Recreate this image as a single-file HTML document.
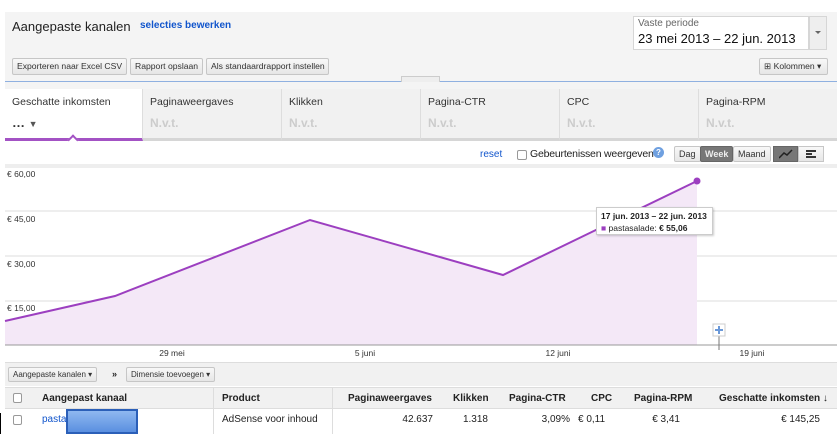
<!DOCTYPE html>
<html><head><meta charset="utf-8"><style>
*{box-sizing:border-box;margin:0;padding:0}
body{width:837px;height:434px;overflow:hidden;background:#fff;font-family:"Liberation Sans",Arial,sans-serif;font-size:11px;color:#222;position:relative}
.a{position:absolute}
.btn{position:absolute;height:17px;border:1px solid #c6c6c6;border-radius:2px;background:linear-gradient(#f8f8f8,#e6e6e6);font-size:8.6px;line-height:15px;padding:0 4px;color:#333;white-space:nowrap}
.tab{position:absolute;top:89px;height:52px;background:#f1f1f1;border-right:1px solid #ddd;border-bottom:3px solid #d6d6d6}
.tab .t{position:absolute;left:7px;top:7px;font-size:10.5px;color:#333}
.tab .v{position:absolute;left:7px;top:27px;font-size:12px;font-weight:bold;color:#ccc}
.th{position:absolute;top:393px;font-weight:bold;font-size:10px;color:#222}
.td{position:absolute;top:414px;font-size:10px;color:#222}
</style></head><body>
<div class="a" style="left:5px;top:12px;width:832px;height:77px;background:#f4f4f4"></div>
<div class="a" style="left:12px;top:19px;font-size:13px;color:#222">Aangepaste kanalen</div>
<div class="a" style="left:140px;top:20px;font-size:10px;font-weight:bold;color:#1155cc">selecties bewerken</div>
<div class="a" style="left:633px;top:16px;width:176px;height:34px;background:#fff;border:1px solid #d6d6d6"></div>
<div class="a" style="left:809px;top:16px;width:18px;height:34px;background:#eee;border:1px solid #d6d6d6"></div>
<div class="a" style="left:815px;top:31px;border:3px solid transparent;border-top:3px solid #666"></div>
<div class="a" style="left:638px;top:18px;font-size:10px;color:#666">Vaste periode</div>
<div class="a" style="left:638px;top:31px;font-size:13px;color:#111">23 mei 2013 – 22 jun. 2013</div>
<div class="btn" style="left:12px;top:58px;width:115px">Exporteren naar Excel CSV</div>
<div class="btn" style="left:130px;top:58px;width:73px">Rapport opslaan</div>
<div class="btn" style="left:206px;top:58px;width:123px">Als standaardrapport instellen</div>
<div class="btn" style="left:759px;top:58px;width:69px">⊞ Kolommen ▾</div>
<div class="a" style="left:5px;top:81px;width:832px;height:1px;background:#8fb0e0"></div>
<div class="a" style="left:401px;top:76px;width:39px;height:6px;background:#eee;border:1px solid #ccc;border-bottom:none"></div>
<div class="tab" style="left:5px;width:138px;background:#fff;border-bottom-color:#a352c4"><div class="t">Geschatte inkomsten</div><div class="v" style="color:#333;font-size:13px;top:26px">… <span style="font-size:9px;color:#555">▼</span></div></div>
<div class="a" style="left:69px;top:136px;width:8px;height:8px;background:#fff;border-left:2px solid #a352c4;border-top:2px solid #a352c4;transform:rotate(45deg)"></div>
<div class="tab" style="left:143px;width:139px"><div class="t">Paginaweergaves</div><div class="v">N.v.t.</div></div>
<div class="tab" style="left:282px;width:139px"><div class="t">Klikken</div><div class="v">N.v.t.</div></div>
<div class="tab" style="left:421px;width:139px"><div class="t">Pagina-CTR</div><div class="v">N.v.t.</div></div>
<div class="tab" style="left:560px;width:139px"><div class="t">CPC</div><div class="v">N.v.t.</div></div>
<div class="tab" style="left:699px;width:138px;border-right:none"><div class="t">Pagina-RPM</div><div class="v">N.v.t.</div></div>
<div class="a" style="left:480px;top:149px;font-size:10px;color:#1155cc">reset</div>
<div class="a" style="left:517px;top:150px;width:10px;height:10px;border:1px solid #999;border-radius:2px;background:#fff"></div>
<div class="a" style="left:530px;top:148px;font-size:10.5px;color:#222;letter-spacing:-0.2px">Gebeurtenissen weergeven</div>
<div class="a" style="left:653px;top:147px;width:11px;height:11px;border-radius:50%;background:#6fa0e0;color:#fff;font-size:8px;text-align:center;line-height:11px;font-weight:bold">?</div>
<div class="btn" style="left:674px;top:146px;height:16px;font-size:9px">Dag</div>
<div class="btn" style="left:700px;top:146px;height:16px;font-size:9px;background:#777;color:#eee;border-color:#666;font-weight:bold">Week</div>
<div class="btn" style="left:733px;top:146px;height:16px;font-size:9px">Maand</div>
<div class="a" style="left:773px;top:146px;width:25px;height:16px;background:#777;border:1px solid #666"></div>
<svg class="a" style="left:779px;top:149px" width="14" height="10"><path d="M0 9 L5 4 L8 6 L13 1" stroke="#222" stroke-width="1.5" fill="none"/></svg>
<div class="a" style="left:798px;top:146px;width:26px;height:16px;background:linear-gradient(#f8f8f8,#e6e6e6);border:1px solid #c6c6c6"></div>
<div class="a" style="left:806px;top:150px;width:10px;height:2px;background:#333"></div>
<div class="a" style="left:806px;top:153px;width:6px;height:2px;background:#333"></div>
<div class="a" style="left:806px;top:156px;width:10px;height:2px;background:#333"></div>
<svg class="a" style="left:0;top:164px" width="837" height="200">
<line x1="5" y1="1" x2="837" y2="1" stroke="#ddd"/>
<line x1="5" y1="3" x2="837" y2="3" stroke="#ddd"/>
<line x1="5" y1="47" x2="837" y2="47" stroke="#ddd"/>
<line x1="5" y1="92" x2="837" y2="92" stroke="#ddd"/>
<line x1="5" y1="137" x2="837" y2="137" stroke="#ddd"/>
<path d="M5 157 L115 132 L310 56 L503 111 L697 17 L697 181 L5 181Z" fill="#f4e8f7"/>
<line x1="5" y1="181" x2="837" y2="181" stroke="#999"/>
<path d="M5 157 L115 132 L310 56 L503 111 L697 17" stroke="#9c3fc0" stroke-width="2" fill="none"/>
<circle cx="697" cy="17" r="3.5" fill="#9c3fc0"/>
<line x1="719" y1="170" x2="719" y2="186" stroke="#777"/>
<rect x="713" y="160" width="12" height="12" fill="#fff" stroke="#ccc"/>
<path d="M719 162v8M715 166h8" stroke="#6a98d8" stroke-width="2"/>
<text x="7" y="13" font-size="8.5" fill="#333">€ 60,00</text>
<text x="7" y="58" font-size="8.5" fill="#333">€ 45,00</text>
<text x="7" y="103" font-size="8.5" fill="#333">€ 30,00</text>
<text x="7" y="147" font-size="8.5" fill="#333">€ 15,00</text>
<text x="172" y="192" font-size="8.5" fill="#333" text-anchor="middle">29 mei</text>
<text x="365" y="192" font-size="8.5" fill="#333" text-anchor="middle">5 juni</text>
<text x="558" y="192" font-size="8.5" fill="#333" text-anchor="middle">12 juni</text>
<text x="752" y="192" font-size="8.5" fill="#333" text-anchor="middle">19 juni</text>
</svg>
<div class="a" style="left:596px;top:207px;width:117px;height:28px;background:#fff;border:1px solid #ccc;box-shadow:1px 1px 2px rgba(0,0,0,.2);font-size:8.5px;padding:2px 4px;line-height:12px"><b>17 jun. 2013 – 22 jun. 2013</b><br><span style="color:#9c3fc0">■</span> pastasalade: <b>€ 55,06</b></div>
<div class="a" style="left:5px;top:362px;width:832px;height:24px;background:#f1f1f1;border-top:1px solid #ddd"></div>
<div class="btn" style="left:8px;top:367px;height:15px;font-size:8px;line-height:13px">Aangepaste kanalen ▾</div>
<div class="a" style="left:112px;top:369px;font-size:9px;font-weight:bold">»</div>
<div class="btn" style="left:126px;top:367px;height:15px;font-size:8px;line-height:13px">Dimensie toevoegen ▾</div>
<div class="a" style="left:5px;top:387px;width:832px;height:22px;background:#f1f1f1;border-top:1px solid #ddd;border-bottom:1px solid #ddd"></div>
<div class="a" style="left:213px;top:387px;width:1px;height:47px;background:#ddd"></div>
<div class="a" style="left:332px;top:387px;width:1px;height:47px;background:#ddd"></div>
<div class="a" style="left:13px;top:393px;width:9px;height:10px;border:1px solid #999;border-radius:2px;background:#fff"></div>
<div class="a" style="left:13px;top:415px;width:9px;height:10px;border:1px solid #999;border-radius:2px;background:#fff"></div>
<div class="th" style="left:42px">Aangepast kanaal</div>
<div class="th" style="left:222px">Product</div>
<div class="th" style="left:348px">Paginaweergaves</div>
<div class="th" style="left:453px">Klikken</div>
<div class="th" style="left:509px">Pagina-CTR</div>
<div class="th" style="left:591px">CPC</div>
<div class="th" style="left:634px">Pagina-RPM</div>
<div class="th" style="left:719px">Geschatte inkomsten ↓</div>
<div class="td" style="left:42px;color:#1155cc">pasta</div>
<div class="td" style="left:222px">AdSense voor inhoud</div>
<div class="td" style="left:390px;width:43px;text-align:right">42.637</div>
<div class="td" style="left:450px;width:38px;text-align:right">1.318</div>
<div class="td" style="left:520px;width:50px;text-align:right">3,09%</div>
<div class="td" style="left:578px">€ 0,11</div>
<div class="td" style="left:630px;width:50px;text-align:right">€ 3,41</div>
<div class="td" style="left:760px;width:60px;text-align:right">€ 145,25</div>
<div class="a" style="left:66px;top:409px;width:72px;height:25px;background:linear-gradient(#8fb8f0,#5a8fe0);border:2px solid #2b5fb8"></div>
<div class="a" style="left:0;top:413px;width:1px;height:21px;background:#000"></div>
</body></html>
